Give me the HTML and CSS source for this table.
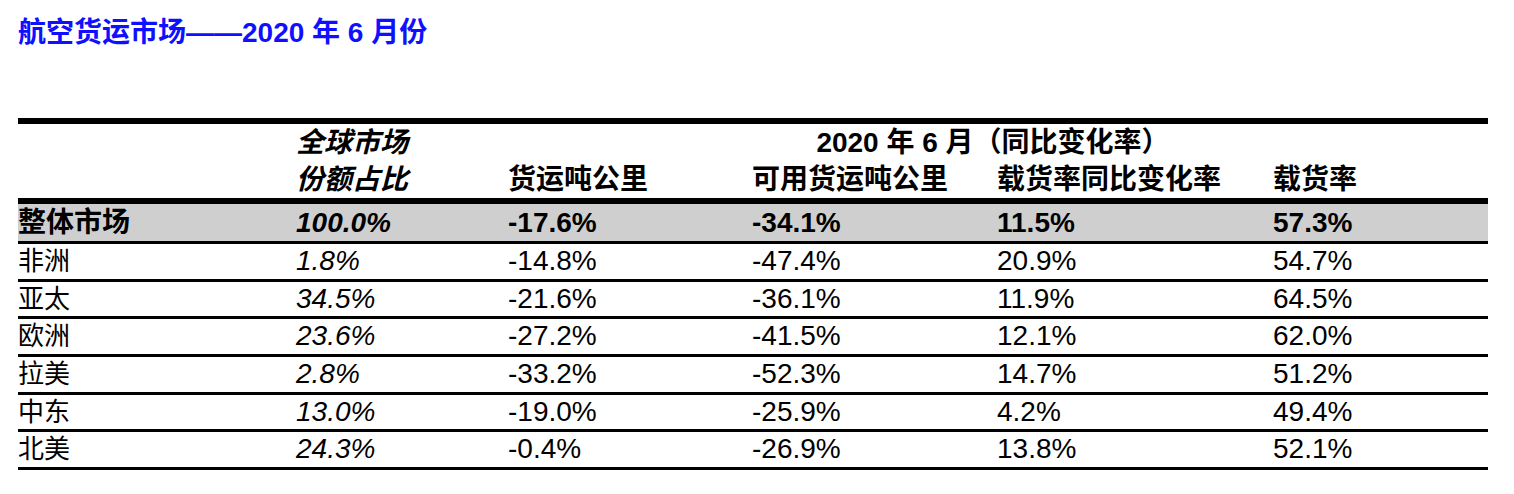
FILE: index.html
```html
<!DOCTYPE html>
<html lang="zh-CN">
<head>
<meta charset="utf-8">
<title>航空货运市场</title>
<link rel="stylesheet" href="styles.css">
</head>
<body>
<div class="page">
  <h1 class="title">航空货运市场——2020 年 6 月份</h1>
  <div class="table">
    <div class="head">
      <div class="c2 r1 it">全球市场</div>
      <div class="span r1">2020 年 6 月（同比变化率）</div>
      <div class="c1 r2"></div>
      <div class="c2 r2 it">份额占比</div>
      <div class="c3 r2">货运吨公里</div>
      <div class="c4 r2">可用货运吨公里</div>
      <div class="c5 r2">载货率同比变化率</div>
      <div class="c6 r2">载货率</div>
    </div>
    <div class="row total">
      <div class="name">整体市场</div><div class="it">100.0%</div><div>-17.6%</div><div>-34.1%</div><div>11.5%</div><div>57.3%</div>
    </div>
    <div class="row">
      <div class="name">非洲</div><div class="it">1.8%</div><div>-14.8%</div><div>-47.4%</div><div>20.9%</div><div>54.7%</div>
    </div>
    <div class="row">
      <div class="name">亚太</div><div class="it">34.5%</div><div>-21.6%</div><div>-36.1%</div><div>11.9%</div><div>64.5%</div>
    </div>
    <div class="row">
      <div class="name">欧洲</div><div class="it">23.6%</div><div>-27.2%</div><div>-41.5%</div><div>12.1%</div><div>62.0%</div>
    </div>
    <div class="row">
      <div class="name">拉美</div><div class="it">2.8%</div><div>-33.2%</div><div>-52.3%</div><div>14.7%</div><div>51.2%</div>
    </div>
    <div class="row">
      <div class="name">中东</div><div class="it">13.0%</div><div>-19.0%</div><div>-25.9%</div><div>4.2%</div><div>49.4%</div>
    </div>
    <div class="row">
      <div class="name">北美</div><div class="it">24.3%</div><div>-0.4%</div><div>-26.9%</div><div>13.8%</div><div>52.1%</div>
    </div>
  </div>
</div>
</body>
</html>
```

FILE: styles.css
```css
* { box-sizing: border-box; }
html, body { margin: 0; padding: 0; background: #fff; }
body {
  font-family: "Liberation Sans", Arial, "Noto Sans CJK SC", sans-serif;
  color: #000;
}
.page {
  padding: 16px 0 0 18px;
}
.title {
  margin: 0;
  height: 34px;
  line-height: 34px;
  font-size: 28px;
  font-weight: bold;
  color: #1010ff;
}
.table {
  margin-top: 68px;
  width: 1470px;
  font-size: 28px;
}
.head, .row {
  display: grid;
  grid-template-columns: 278px 212px 244px 245px 276px 215px;
}
.head {
  border-top: 6px solid #000;
  border-bottom: 6px solid #000;
  grid-template-rows: 37px 37px;
  font-weight: bold;
  line-height: 37px;
}
.head .r1 { grid-row: 1; }
.head .r2 { grid-row: 2; }
.head .c1 { grid-column: 1; }
.head .c2 { grid-column: 2; }
.head .c3 { grid-column: 3; }
.head .c4 { grid-column: 4; }
.head .c5 { grid-column: 5; }
.head .c6 { grid-column: 6; }
.head .span {
  grid-column: 3 / 7;
  text-align: center;
  padding-right: 10px;
}
.row {
  height: 37.67px;
  border-bottom: 3px solid #000;
  line-height: 34.67px;
  white-space: nowrap;
}
.row .name {
  font-size: 26px;
}
.row.total {
  height: 40px;
  line-height: 37px;
  background: #cfcfcf;
  font-weight: bold;
}
.row.total .name {
  font-size: 28px;
}
.it { font-style: italic; }
```
